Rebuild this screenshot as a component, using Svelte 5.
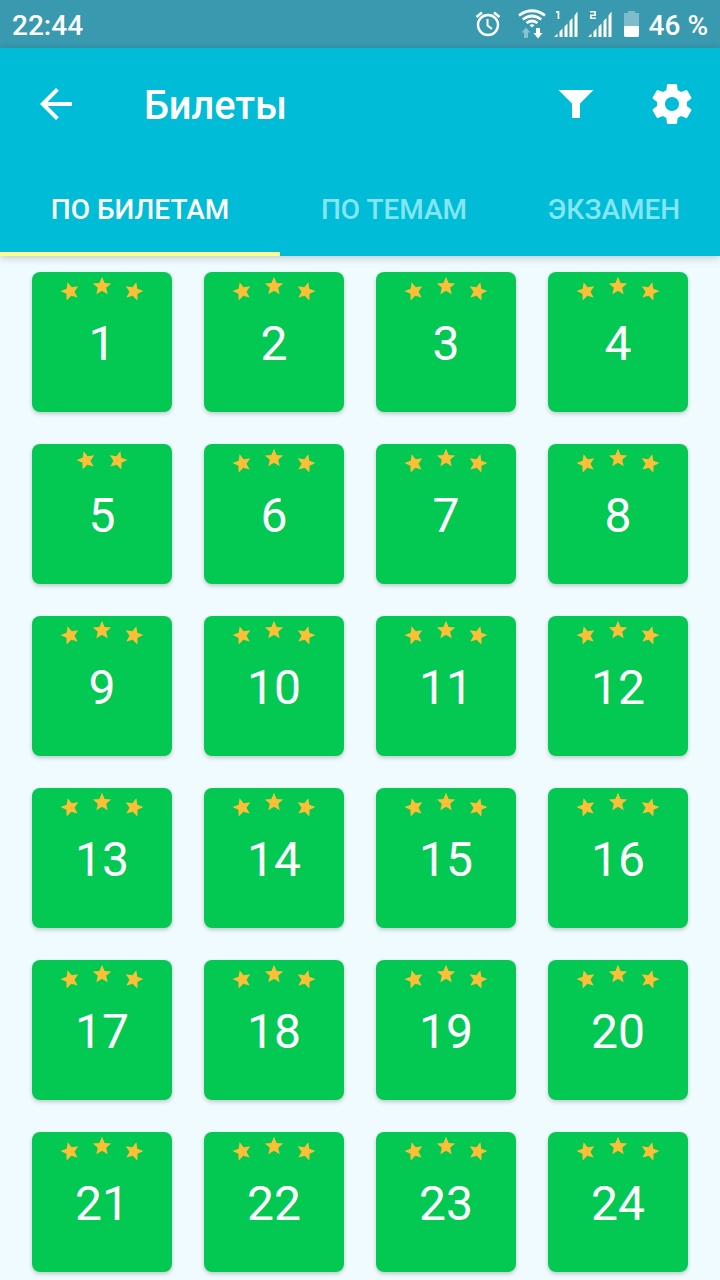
<script lang="ts">
	const tabs = [
		{ label: 'По билетам', width: 280 },
		{ label: 'По темам', width: 228 },
		{ label: 'Экзамен', width: 212 }
	];

	// ticket 5 is the only one with two stars
	const tickets = Array.from({ length: 24 }, (_, i) => ({
		number: i + 1,
		stars: i + 1 === 5 ? 2 : 3
	}));

	let active = $state(0);
</script>

{#snippet star(kind: string)}
	<svg class="star {kind}" viewBox="0 0 24 24">
		<path
			d="M12 17.27 18.18 21l-1.64-7.03L22 9.24l-7.19-.61L12 2 9.19 8.63 2 9.24l5.46 4.73L5.82 21z"
		/>
	</svg>
{/snippet}

{#snippet signal(sim: string)}
	<svg class="signal" width="26" height="30" viewBox="0 0 26 30">
		<path d="M1 28l3.5-3.5V28zM6.5 22.5l3-3V28h-3zM11.5 17.5l3-3V28h-3zM16.5 12l3-3V28h-3zM21.5 6.5l3-4V28h-3z" />
		{#if sim === '1'}
			<path d="M3 2h3.300v8H4.600V3.700H3z" />
		{:else}
			<path d="M3 2h6v5H4.700v1.500H9V10H3V5.500h4.300v-2H3z" />
		{/if}
	</svg>
{/snippet}

<div class="screen">
	<div class="status">
		<span class="time">22:44</span>
		<svg class="alarm" width="26" height="28" viewBox="0 0 26 28">
			<g fill="none" stroke="#fff">
				<circle cx="13" cy="15" r="10" stroke-width="2.4" />
				<path d="M12.5 9v6.500l4.500 3.500" stroke-width="2" />
				<path d="M1.500 7l5.500-4.500M24.500 7L19 2.500" stroke-width="2.600" />
			</g>
		</svg>
		<svg class="wifi" width="28" height="30" viewBox="0 0 28 30">
			<g fill="none" stroke="#fff" stroke-width="2.700">
				<path d="M1 6.500q13-9.500 26 0M4.800 10.500q9.200-7 18.400 0M8.500 14q5.500-4 11 0" />
			</g>
			<path d="M11.500 16q2.500-1.600 5 0L14 18.500z" fill="#fff" />
			<path d="M8 18.500l4.500 5H10v5.500H6v-5.500H3.500z" fill="#fff" opacity=".4" />
			<path d="M18 19h4v5h2.500L20 29.500 15.500 24H18z" fill="#fff" />
		</svg>
		{@render signal('1')}
		{@render signal('2')}
		<svg class="battery" width="16" height="28" viewBox="0 0 16 28">
			<path d="M4 1h7v2h4v13H0V3h4z" fill="#fff" opacity=".35" />
			<path d="M0 16h15v9.500q0 1.500-1.500 1.500h-12Q0 27 0 25.500z" fill="#fff" />
		</svg>
		<span class="percent">46 %</span>
	</div>

	<header>
		<div class="toolbar">
			<button class="back" aria-label="Назад">
				<svg width="48" height="48" viewBox="0 0 24 24">
					<path d="M20 11H7.830l5.590-5.590L12 4l-8 8 8 8 1.410-1.410L7.830 13H20z" />
				</svg>
			</button>
			<h1>Билеты</h1>
			<button class="filter" aria-label="Фильтр">
				<svg width="36" height="30" viewBox="0 0 36 30">
					<path d="M.5 1h35L22 14.500V29h-8V14.500z" />
				</svg>
			</button>
			<button class="settings" aria-label="Настройки">
				<svg width="48" height="48" viewBox="0 0 24 24">
					<path
						d="M19.430 12.980c.04-.32.07-.64.07-.98s-.03-.66-.07-.98l2.110-1.650c.19-.15.24-.42.12-.64l-2-3.460c-.12-.22-.39-.3-.61-.22l-2.490 1c-.52-.4-1.080-.73-1.690-.98l-.38-2.650C14.460 2.180 14.250 2 14 2h-4c-.25 0-.46.18-.49.42l-.38 2.650c-.61.25-1.170.59-1.690.98l-2.490-1c-.23-.09-.49 0-.61.22l-2 3.460c-.13.22-.07.49.12.64l2.110 1.650c-.04.32-.07.65-.07.98s.03.66.07.98l-2.110 1.650c-.19.15-.24.42-.12.64l2 3.460c.12.22.39.3.61.22l2.490-1c.52.4 1.080.73 1.690.98l.38 2.650c.03.24.24.42.49.42h4c.25 0 .46-.18.49-.42l.38-2.650c.61-.25 1.170-.59 1.690-.98l2.490 1c.23.09.49 0 .61-.22l2-3.460c.12-.22.07-.49-.12-.64l-2.110-1.650zM12 15.500c-1.930 0-3.500-1.570-3.500-3.500s1.570-3.500 3.500-3.500 3.500 1.570 3.500 3.500-1.570 3.500-3.500 3.500z"
					/>
				</svg>
			</button>
		</div>
		<nav>
			{#each tabs as tab, i}
				<button
					class="tab"
					class:active={active === i}
					style="width: {tab.width}px"
					onclick={() => (active = i)}
				>
					{tab.label}
				</button>
			{/each}
		</nav>
	</header>

	<main>
		{#each tickets as ticket}
			<div class="ticket">
				<div class="stars" class:pair={ticket.stars === 2}>
					{@render star('left')}
					{#if ticket.stars === 3}
						{@render star('middle')}
					{/if}
					{@render star('right')}
				</div>
				<span class="number">{ticket.number}</span>
			</div>
		{/each}
	</main>
</div>

<style>
	:global(body) {
		background: #effbff;
	}

	.screen {
		width: 720px;
		height: 1280px;
		overflow: hidden;
		display: flex;
		flex-direction: column;
		background: #effbfe;
		color: #fff;
		font-family: Roboto, sans-serif;
	}

	svg {
		display: block;
		flex: none;
		fill: currentColor;
	}

	.status {
		flex: none;
		height: 48px;
		box-sizing: border-box;
		display: flex;
		align-items: center;
		padding: 0 12px;
		background: #3899af;
		font-size: 28px;
		font-weight: 500;
		line-height: 48px;
	}

	.time,
	.percent {
		padding-top: 3px;
	}

	.alarm {
		margin-left: auto;
	}

	.wifi {
		margin-left: 17px;
	}

	.signal {
		margin-left: 8px;
	}

	.wifi + .signal {
		margin-left: 7px;
	}

	.battery {
		margin-left: 11px;
	}

	.percent {
		margin-left: 9px;
		white-space: nowrap;
	}

	header {
		flex: none;
		height: 208px;
		background: #00bcd6;
		box-shadow: 0 2px 8px rgba(0, 0, 0, 0.2);
	}

	button {
		padding: 0;
		border: 0;
		background: none;
		color: inherit;
		font: inherit;
		cursor: pointer;
	}

	.toolbar {
		height: 112px;
		display: flex;
		align-items: center;
		padding: 0 24px 0 32px;
	}

	h1 {
		flex: 1;
		margin: 4px 0 0 64px;
		font-size: 39.8px;
		font-weight: 500;
		line-height: 48px;
	}

	.settings {
		margin-left: 54px;
	}

	nav {
		height: 96px;
		display: flex;
	}

	.tab {
		box-sizing: border-box;
		padding-top: 6px;
		border-bottom: 4px solid transparent;
		color: #84e6f4;
		font-size: 28px;
		font-weight: 500;
		text-transform: uppercase;
	}

	.tab.active {
		border-bottom-color: #ffff8d;
		color: #fff;
	}

	main {
		display: grid;
		grid-template-columns: repeat(4, 140px);
		grid-auto-rows: 140px;
		gap: 32px;
		padding: 16px 32px;
	}

	.ticket {
		display: flex;
		flex-direction: column;
		align-items: center;
		border-radius: 8px;
		background: #03c953;
		box-shadow: 0 2px 4px rgba(0, 0, 0, 0.2);
	}

	/* the outer stars hang lower than the middle one */
	.stars {
		height: 32px;
		box-sizing: border-box;
		display: flex;
		justify-content: center;
		gap: 10px;
		padding-top: 8px;
	}

	.stars.pair {
		padding-top: 5px;
	}

	.star {
		width: 22px;
		height: 22px;
		fill: #fcbf35;
	}

	.left {
		transform: rotate(-15deg);
	}

	.middle {
		margin-top: -5px;
	}

	.right {
		transform: rotate(15deg);
	}

	.number {
		margin-top: 12px;
		font-size: 48px;
		line-height: 56px;
	}
</style>
